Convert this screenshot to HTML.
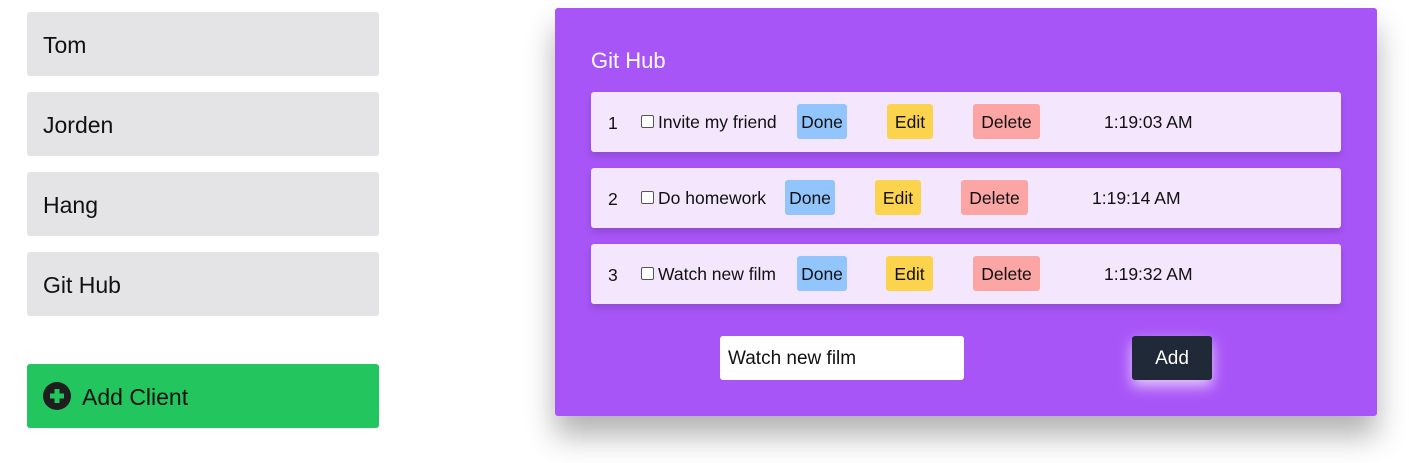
<!DOCTYPE html>
<html><head><style>
body{margin:0;width:1409px;height:463px;background:#fff;position:relative;overflow:hidden;font-family:"Liberation Sans",sans-serif;}
.a{position:absolute;}
.cl{position:absolute;left:27px;width:352px;height:64px;background:#e4e4e7;border-radius:3px;font-size:23px;line-height:66px;padding-left:16px;box-sizing:border-box;color:#111;}
.panel{left:555px;top:8px;width:822px;height:408px;background:#a855f7;border-radius:3px;box-shadow:0 20px 30px rgba(0,0,0,.3);}
.row{position:absolute;left:36px;width:750px;height:60px;background:#f3e6fd;border-radius:3px;box-shadow:0 4px 8px rgba(0,0,0,.15);font-size:17.5px;color:#111;}
.row span,.row div{position:absolute;}
.b{top:12px;height:35px;line-height:36px;border-radius:3px;text-align:center;}
.cb{width:11px;height:11px;border:1px solid #555;border-radius:2px;background:#fff;top:23px;}
</style></head><body>
<div class="cl" style="top:12px">Tom</div>
<div class="cl" style="top:92px">Jorden</div>
<div class="cl" style="top:172px">Hang</div>
<div class="cl" style="top:252px">Git Hub</div>
<div class="cl" style="top:364px;background:#22c55e;padding-left:55px">Add Client
<svg class="a" style="left:16px;top:18px" width="28" height="28" viewBox="0 0 28 28"><circle cx="14" cy="14" r="14" fill="#1e1e1e"/><path d="M14 7v14M7 14h14" stroke="#22c55e" stroke-width="5"/></svg></div>
<div class="a panel">
<div class="a" style="left:36px;top:40px;color:#fff;font-size:22px">Git Hub</div>
<div class="row" style="top:84px"><span style="left:17px;top:21px">1</span><div class="cb" style="left:50px"></div><span style="left:67px;top:20px">Invite my friend</span><div class="b" style="left:206px;width:50px;background:#93c5fd">Done</div><div class="b" style="left:296px;width:46px;background:#fcd34d">Edit</div><div class="b" style="left:382px;width:67px;background:#fca5a5">Delete</div><span style="left:513px;top:20px">1:19:03 AM</span></div>
<div class="row" style="top:160px"><span style="left:17px;top:21px">2</span><div class="cb" style="left:50px"></div><span style="left:67px;top:20px">Do homework</span><div class="b" style="left:194px;width:50px;background:#93c5fd">Done</div><div class="b" style="left:284px;width:46px;background:#fcd34d">Edit</div><div class="b" style="left:370px;width:67px;background:#fca5a5">Delete</div><span style="left:501px;top:20px">1:19:14 AM</span></div>
<div class="row" style="top:236px"><span style="left:17px;top:21px">3</span><div class="cb" style="left:50px"></div><span style="left:67px;top:20px">Watch new film</span><div class="b" style="left:206px;width:50px;background:#93c5fd">Done</div><div class="b" style="left:295px;width:47px;background:#fcd34d">Edit</div><div class="b" style="left:382px;width:67px;background:#fca5a5">Delete</div><span style="left:513px;top:20px">1:19:32 AM</span></div>
<div class="a" style="left:165px;top:328px;width:244px;height:44px;background:#fff;border-radius:3px;font-size:19px;line-height:46px;padding-left:8px;box-sizing:border-box;color:#111">Watch new film</div>
<div class="a" style="left:577px;top:328px;width:80px;height:44px;background:#1f2937;border-radius:3px;color:#fff;font-size:19px;line-height:46px;text-align:center;box-shadow:0 6px 14px rgba(255,255,255,.7)">Add</div>
</div>
</body></html>
